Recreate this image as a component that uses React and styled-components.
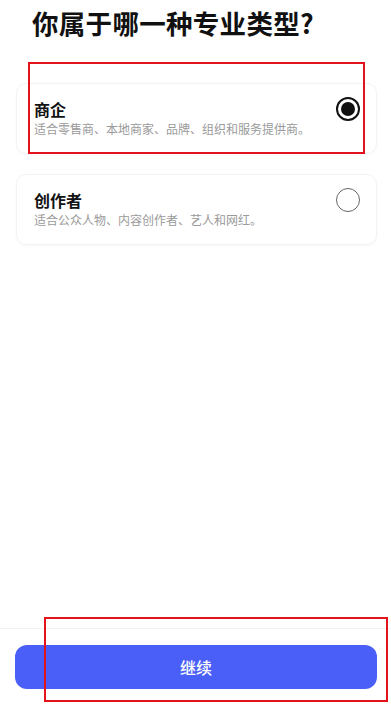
import React, {useState} from 'react'
import styled, {createGlobalStyle} from 'styled-components'

const GlobalStyle = createGlobalStyle`
    * { box-sizing: border-box; }
    html, body {
        margin: 0;
        padding: 0;
        background: #fff;
        font-family: "Noto Sans CJK SC", "Noto Sans", sans-serif;
    }
`

const types = [
    {id: 'business', title: '商企', desc: '适合零售商、本地商家、品牌、组织和服务提供商。'},
    {id: 'creator', title: '创作者', desc: '适合公众人物、内容创作者、艺人和网红。'},
]

function App() {
    const [selected, setSelected] = useState('business')
    return (
        <Page>
            <GlobalStyle />
            <Title>你属于哪一种专业类型?</Title>
            <List>
                {types.map(t => (
                    <Card key={t.id} onClick={() => setSelected(t.id)}>
                        <Texts>
                            <CardTitle>{t.title}</CardTitle>
                            <CardDesc>{t.desc}</CardDesc>
                        </Texts>
                        <Radio checked={selected === t.id} />
                    </Card>
                ))}
            </List>
            <Footer>
                <ContinueButton>继续</ContinueButton>
            </Footer>
            {/* annotation boxes from the screenshot */}
            <Marker top={62} left={28} width={337} height={92} />
            <Marker top={617} left={44} width={344} height={85} />
        </Page>
    )
}

export default App

const Page = styled.div`
    position: relative;
    height: 712px;
    display: flex;
    flex-direction: column;
    overflow: hidden;
`

const Title = styled.h1`
    margin: 0;
    padding: 6px 0 0 32px;
    font-size: 26.5px;
    line-height: 34px;
    font-weight: 700;
    color: #111;
    letter-spacing: 0.3px;
`

const List = styled.div`
    display: flex;
    flex-direction: column;
    gap: 20px;
    padding: 43px 14px 0 16px;
`

const Card = styled.div`
    display: flex;
    align-items: flex-start;
    justify-content: space-between;
    height: 71px;
    padding: 14px 16px 0 17px;
    border: 1px solid #f3f3f5;
    border-radius: 10px;
    box-shadow: 0 1px 3px rgba(0, 0, 0, 0.03);
    cursor: pointer;
`

const Texts = styled.div`
    display: flex;
    flex-direction: column;
`

const CardTitle = styled.div`
    font-size: 16px;
    line-height: 22px;
    font-weight: 700;
    color: #111;
`

const CardDesc = styled.div`
    font-size: 12px;
    line-height: 18px;
    color: #9a9a9a;
`

const Radio = styled.span`
    width: 24px;
    height: 24px;
    margin-top: -1px;
    border-radius: 50%;
    flex-shrink: 0;
    border: ${props => props.checked ? '2.5px solid #111' : '1.5px solid #666'};
    display: flex;
    align-items: center;
    justify-content: center;
    &::after {
        content: '';
        display: ${props => props.checked ? 'block' : 'none'};
        width: 14px;
        height: 14px;
        border-radius: 50%;
        background: #111;
    }
`

const Footer = styled.div`
    margin-top: auto;
    border-top: 1px solid #f3f3f5;
    padding: 16px 14px 23px 15px;
`

const ContinueButton = styled.button`
    width: 100%;
    height: 44px;
    border: none;
    border-radius: 12px;
    background: #4a5ff7;
    color: #fff;
    font-family: inherit;
    font-size: 16px;
    font-weight: 500;
    cursor: pointer;
`

const Marker = styled.div`
    position: absolute;
    top: ${props => props.top}px;
    left: ${props => props.left}px;
    width: ${props => props.width}px;
    height: ${props => props.height}px;
    border: 2.5px solid #e3131b;
    pointer-events: none;
`
